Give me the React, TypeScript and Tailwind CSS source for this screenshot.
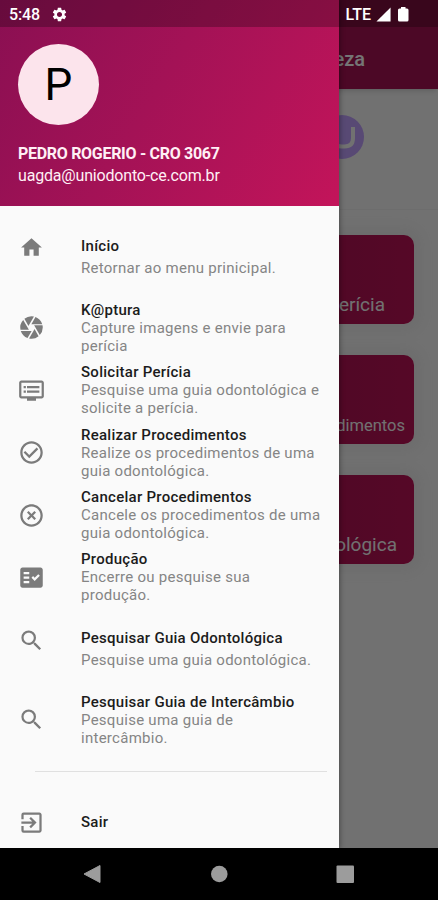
import React from "react";
import clsx from "clsx";
import type { IconType } from "react-icons";
import {
  MdCamera,
  MdCheckCircleOutline,
  MdDvr,
  MdExitToApp,
  MdFactCheck,
  MdHighlightOff,
  MdHome,
  MdSearch,
  MdSettings,
  MdSignalCellular4Bar,
} from "react-icons/md";

interface MenuItem {
  icon: IconType;
  iconClass?: string;
  title: string;
  lines: string[];
}

const menuItems: MenuItem[] = [
  {
    icon: MdHome,
    iconClass: "w-[25px] h-[25px] mr-px ml-px",
    title: "Início",
    lines: ["Retornar ao menu prinicipal."],
  },
  {
    icon: MdCamera,
    title: "K@ptura",
    lines: ["Capture imagens e envie para", "perícia"],
  },
  {
    icon: MdDvr,
    title: "Solicitar Perícia",
    lines: ["Pesquise uma guia odontológica e", "solicite a perícia."],
  },
  {
    icon: MdCheckCircleOutline,
    title: "Realizar Procedimentos",
    lines: ["Realize os procedimentos de uma", "guia odontológica."],
  },
  {
    icon: MdHighlightOff,
    title: "Cancelar Procedimentos",
    lines: ["Cancele os procedimentos de uma", "guia odontológica."],
  },
  {
    icon: MdFactCheck,
    title: "Produção",
    lines: ["Encerre ou pesquise sua", "produção."],
  },
  {
    icon: MdSearch,
    title: "Pesquisar Guia Odontológica",
    lines: ["Pesquise uma guia odontológica."],
  },
  {
    icon: MdSearch,
    title: "Pesquisar Guia de Intercâmbio",
    lines: ["Pesquise uma guia de", "intercâmbio."],
  },
];

const cards = [
  { label: "Solicitar Perícia", className: "pr-[29px] text-[19px]" },
  { label: "Realizar Procedimentos", className: "pr-[9px] text-[16.5px]" },
  { label: "Guia Odontológica", className: "pr-[17px] text-[19px]" },
];

function MenuRow({ icon: Icon, iconClass, title, lines }: MenuItem) {
  const single = lines.length === 1;

  return (
    <li
      className={clsx(
        "flex pl-[18px]",
        single ? "h-20 items-start pt-[18px]" : "h-[62.4px] items-center"
      )}
    >
      <Icon
        className={clsx("shrink-0 text-[#7b7b7b]", iconClass ?? "w-[27px] h-[27px]")}
      />
      <div
        className={clsx(
          "ml-9 whitespace-nowrap",
          single ? "leading-[22px] pt-[0.4px]" : "leading-[18px]"
        )}
      >
        <p className="text-[15px] font-medium tracking-[0.27px] text-[#1c1c1c]">
          {title}
        </p>
        {lines.map((line) => (
          <p key={line} className="text-[15px] tracking-[0.27px] text-[#858585]">
            {line}
          </p>
        ))}
      </div>
    </li>
  );
}

function StatusBar() {
  return (
    <div className="absolute inset-x-0 top-0 h-[27px] flex items-center justify-between bg-black/25 pl-[9px] pr-[26px] text-white">
      <div className="flex items-center gap-[11px] pt-0.5">
        <span className="text-[16px] font-medium tracking-[-0.1px]">5:48</span>
        <MdSettings className="w-[17px] h-[17px]" />
      </div>
      <div className="flex items-center pt-0.5">
        <span className="text-[16px] font-medium mr-1">LTE</span>
        <MdSignalCellular4Bar className="w-[17px] h-[17px] mr-[3px]" />
        <svg viewBox="0 0 17 17" className="w-[17px] h-[17px]" fill="currentColor">
          <path d="M6 1h4.500v1.500H12q1.500 0 1.500 1.500v10q0 1.500-1.500 1.500H4.500Q3 15.500 3 14V4q0-1.500 1.500-1.500H6Z" />
        </svg>
      </div>
    </div>
  );
}

function HomePage() {
  return (
    <div className="h-[848px] bg-[#f7f7f7]">
      <header className="h-[89px] flex items-end justify-end pb-[15px] pr-[73px] bg-[#a61353] shadow-md">
        <h1 className="text-[20px] font-medium text-white">
          Uniodonto Fortaleza
        </h1>
      </header>
      <div className="h-[121px] flex justify-end pt-[26px] pr-[74px] border-b border-[#eeeeee]">
        <svg viewBox="0 0 44 44" className="w-[44px] h-[44px]">
          <circle cx="22" cy="22" r="22" fill="#bf9ffc" />
          <path
            d="M13 12v11q0 8.500 8.500 8.500h3q8.500 0 8.500-8.500V12"
            fill="none"
            stroke="#f7f7f7"
            strokeWidth="4"
          />
        </svg>
      </div>
      <div className="flex flex-col gap-[31px] px-6 pt-[25px]">
        {cards.map((card) => (
          <div
            key={card.label}
            className={clsx(
              "h-[89px] rounded-[10px] flex items-end justify-end pb-[5px] bg-linear-to-r from-[#8c0f50] to-[#bb1355] text-[#f7f7f7] shadow-[0_0_14px_10px_#ededed]",
              card.className
            )}
          >
            {card.label}
          </div>
        ))}
      </div>
    </div>
  );
}

function Drawer() {
  return (
    <aside className="absolute left-0 top-0 w-[339.4px] h-[848px] bg-[#fafafa] shadow-[0_0_5px_1px_rgba(0,0,0,0.35)]">
      <div className="h-[206px] pl-[18px] pt-[44px] bg-linear-121 from-[#8a0f52] to-[#c3145a] text-[#fff0f5]">
        <div className="w-[81px] h-[81px] rounded-full bg-[#fce4ec] flex items-center justify-center text-[44px] text-black">
          P
        </div>
        <p className="mt-[18px] text-[16px] leading-[22px] font-bold tracking-[-0.3px]">
          PEDRO ROGERIO - CRO 3067
        </p>
        <p className="text-[16px] leading-[22px] tracking-[-0.18px]">
          uagda@uniodonto-ce.com.br
        </p>
      </div>
      <ul className="pt-[10.7px]">
        {menuItems.map((item) => (
          <MenuRow key={item.title} {...item} />
        ))}
      </ul>
      <hr className="mt-5 ml-[35px] mr-3 border-[#e0e0e0]" />
      <div className="mt-[37px] pl-[18px] flex items-center">
        <MdExitToApp className="w-[27px] h-[27px] text-[#7b7b7b]" />
        <span className="ml-9 text-[15px] font-medium tracking-[0.27px] text-[#1c1c1c]">
          Sair
        </span>
      </div>
    </aside>
  );
}

export default function App() {
  return (
    <div className="relative w-[438px] h-[900px] overflow-hidden font-[Roboto,sans-serif]">
      <HomePage />
      <div className="absolute inset-x-0 top-0 h-[848px] bg-black/54" />
      <Drawer />
      <StatusBar />
      <nav className="h-[52px] bg-black text-[#9c9c9c]">
        <svg viewBox="0 0 438 52" className="w-full h-full" fill="currentColor">
          <path d="M84 26 100 17.500v17Z" stroke="currentColor" strokeLinejoin="round" />
          <circle cx="219.300" cy="26" r="8.300" />
          <rect x="336.500" y="17.500" width="17.500" height="17.500" rx="1" />
        </svg>
      </nav>
    </div>
  );
}
